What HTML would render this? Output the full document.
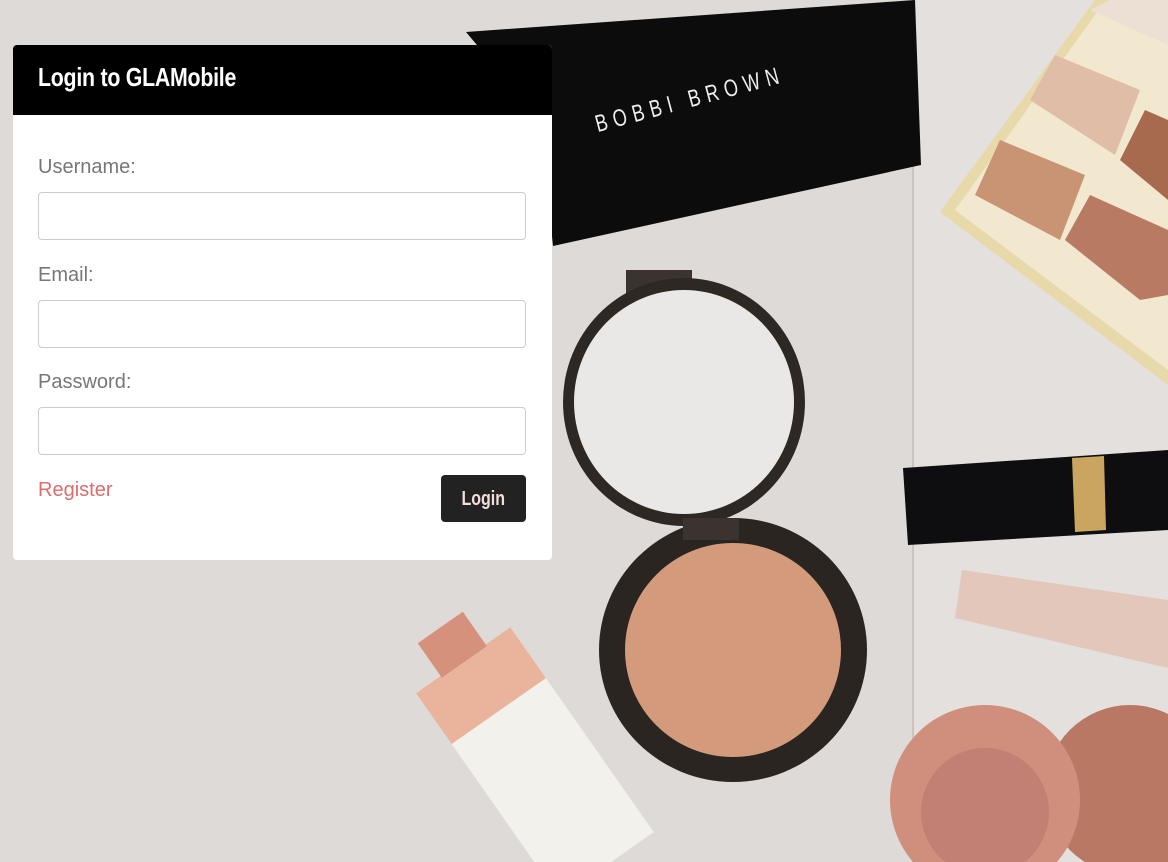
<!DOCTYPE html>
<html><head><meta charset="utf-8"><style>
html,body{margin:0;padding:0;width:1168px;height:862px;overflow:hidden;background:#dcd8d5;font-family:"Liberation Sans",sans-serif}
svg.bg{position:absolute;left:0;top:0}
.card{position:absolute;left:13px;top:45px;width:539px;height:515px;background:#fff;border-radius:4px;overflow:hidden}
.hd{height:70px;background:#000;color:#fff;font-size:26px;font-weight:bold;line-height:64px;padding-left:25px}
.hd span{display:inline-block;transform:scaleX(0.82);transform-origin:0 50%;letter-spacing:-0.3px}
label{position:absolute;left:25px;font-size:20px;color:#777}
.in{position:absolute;left:25px;width:488px;height:48px;border:1px solid #ccc;border-radius:4px;box-sizing:border-box}
.reg{position:absolute;left:25px;top:434px;font-size:20px;color:#e06b6b}
.btn{position:absolute;left:428px;top:430px;width:85px;height:47px;background:#222;border-radius:4px;color:#f2ddd8;font-size:20px;font-weight:bold;text-align:center;line-height:49px}
.btn span{display:inline-block;transform:scaleX(0.8)}
</style></head><body>
<svg class="bg" width="1168" height="862">
<rect width="1168" height="862" fill="#dedad7"/>
<rect x="912" y="0" width="256" height="862" fill="#e3e0dd"/>
<line x1="913" y1="0" x2="913" y2="862" stroke="#c9c4c0" stroke-width="2"/>
<polygon points="466,32 915,0 921,165 553,246 540,120" fill="#0c0c0c"/>
<text x="598" y="132" fill="#eee" font-size="24" font-family="Liberation Sans,sans-serif" letter-spacing="8" transform="rotate(-15 598 132) scale(0.75 1) translate(199 0)" >BOBBI BROWN</text>
<polygon points="940,212 1095,0 1168,0 1168,385" fill="#e8d9ab"/>
<polygon points="955,210 1100,8 1168,40 1168,370" fill="#f1e8cf"/>
<polygon points="1030,100 1055,55 1140,90 1115,155" fill="#e0bda6"/>
<polygon points="975,195 1000,140 1085,175 1060,240" fill="#c89474"/>
<polygon points="1065,240 1090,195 1168,230 1168,295 1140,300" fill="#b97a63"/>
<polygon points="1120,160 1145,110 1168,120 1168,200" fill="#a86a4e"/>
<polygon points="1090,10 1110,0 1168,0 1168,45" fill="#ece0d5"/>
<rect x="626" y="270" width="66" height="30" fill="#3a3330"/>
<ellipse cx="684" cy="402" rx="121" ry="124" fill="#2e2825"/>
<ellipse cx="684" cy="402" rx="110" ry="112" fill="#e9e8e6"/>
<ellipse cx="733" cy="650" rx="134" ry="132" fill="#2b2522"/>
<ellipse cx="733" cy="650" rx="108" ry="107" fill="#d49a7c"/>
<rect x="683" y="518" width="56" height="22" fill="#3a3330"/>
<polygon points="903,468 1168,450 1168,530 908,545" fill="#0e0e10"/>
<polygon points="1072,458 1104,456 1106,530 1075,532" fill="#c9a560"/>
<polygon points="962,570 1168,600 1168,668 955,618" fill="#e2c7ba"/>
<circle cx="1130" cy="790" r="85" fill="#b97863"/>
<circle cx="985" cy="800" r="95" fill="#cf8f7c"/>
<circle cx="985" cy="812" r="64" fill="#c27f74"/>
<g transform="rotate(-35 530 760)">
<rect x="475" y="700" width="115" height="190" fill="#f3f1ec"/>
<rect x="475" y="640" width="115" height="62" fill="#e9b49b"/>
<rect x="505" y="600" width="55" height="42" fill="#d6917d"/>
</g>
</svg>
<div class="card">
<div class="hd"><span>Login to GLAMobile</span></div>
<label style="top:111px">Username:</label>
<div class="in" style="top:147px"></div>
<label style="top:219px">Email:</label>
<div class="in" style="top:255px"></div>
<label style="top:326px">Password:</label>
<div class="in" style="top:362px"></div>
<div class="reg">Register</div>
<div class="btn"><span>Login</span></div>
</div>
</body></html>
